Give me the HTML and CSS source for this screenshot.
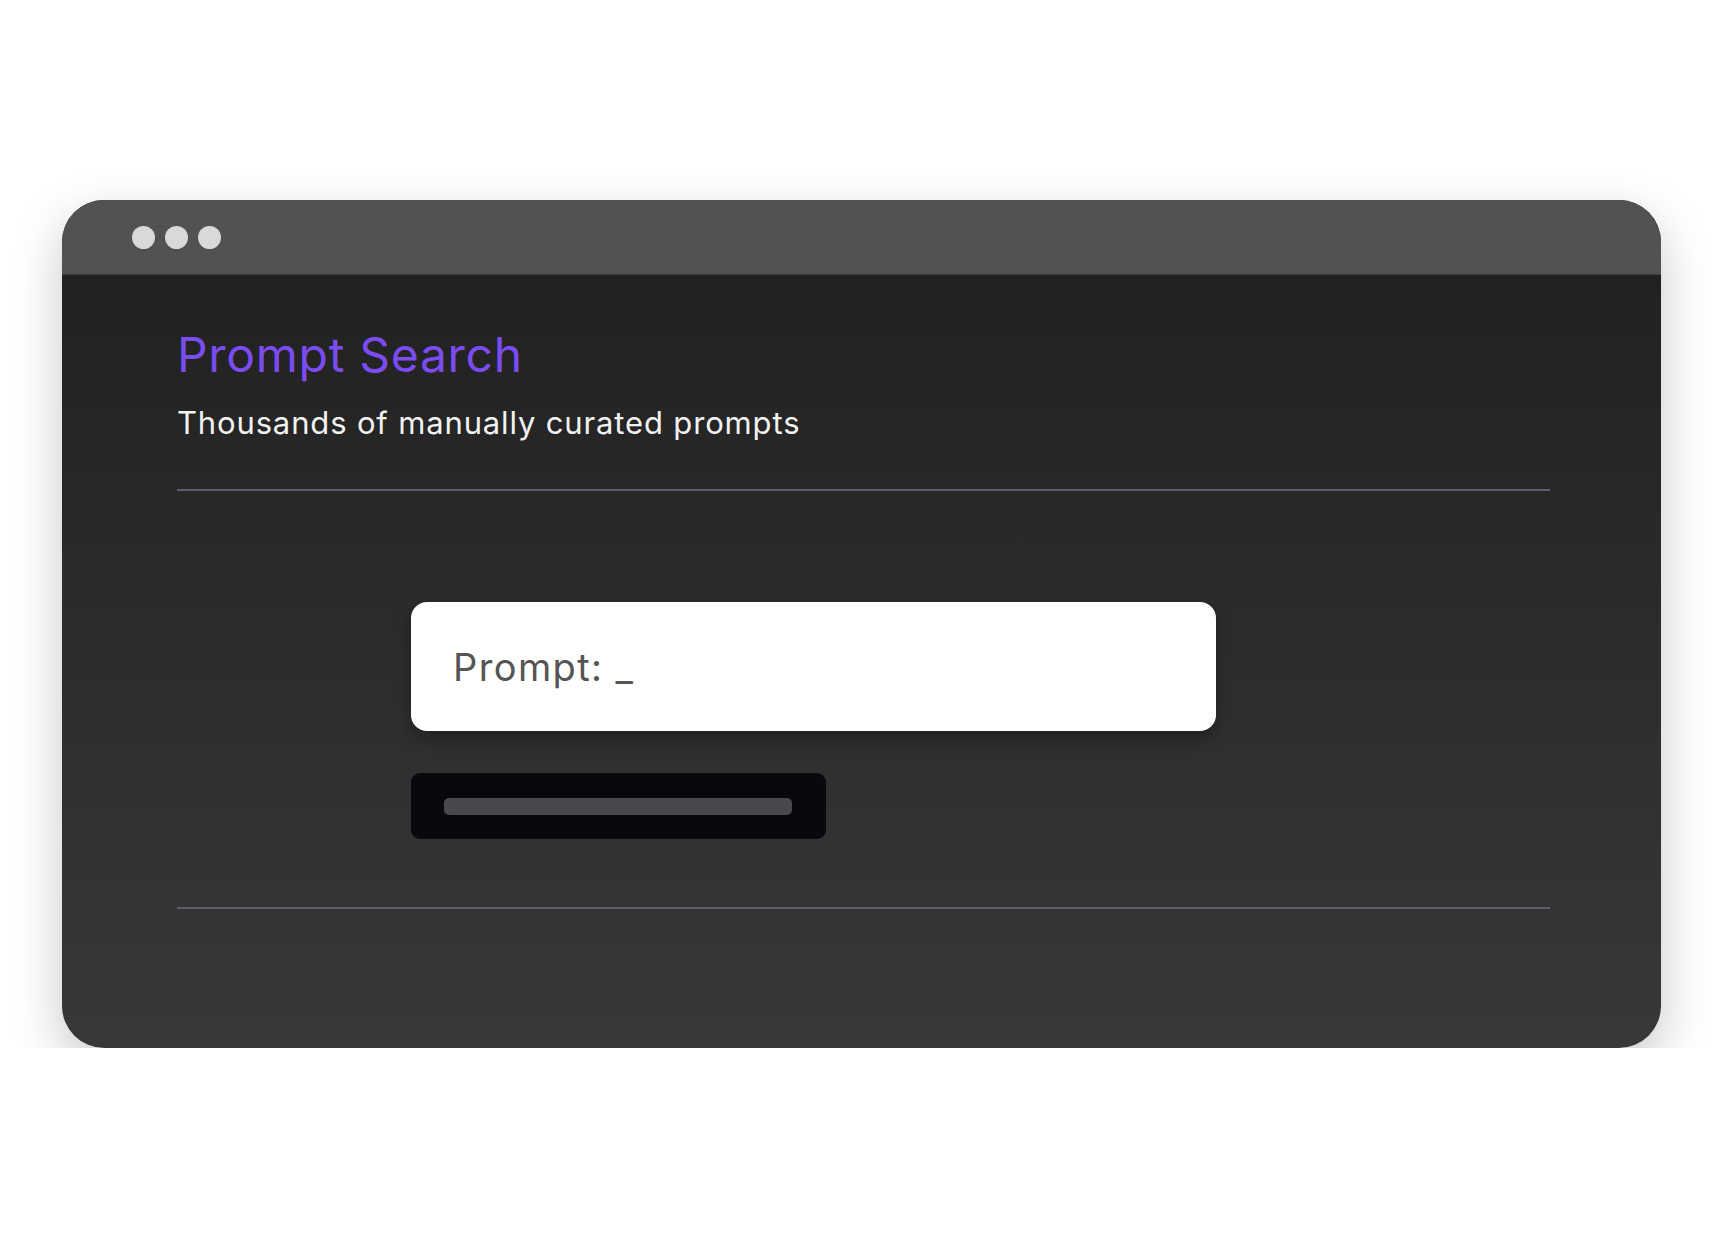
FILE: index.html
```html
<!DOCTYPE html>
<html lang="en">
  <head>
    <meta charset="UTF-8" />
    <title>Prompt Search</title>
    <link rel="stylesheet" href="styles.css">
  </head>
  <body>
    <div class="window">
      <div class="titlebar">
        <span class="dot"></span>
        <span class="dot"></span>
        <span class="dot"></span>
      </div>
      <div class="content">
        <h1 class="title">Prompt Search</h1>
        <p class="subtitle">Thousands of manually curated prompts</p>
        <hr class="line">
        <div class="search">
          <div class="input">Prompt: _</div>
          <div class="button"><span class="button-bar"></span></div>
        </div>
        <hr class="line">
      </div>
    </div>
  </body>
</html>
```

FILE: styles.css
```css
*{
    margin: 0;
    padding: 0;
    box-sizing: border-box;
}
body{
    background: #ffffff;
    font-family: Inter, "Liberation Sans", sans-serif;
}
.window{
    width: 1599px;
    height: 848px;
    margin-top: 200px;
    margin-left: 62px;
    border-radius: 42px;
    overflow: hidden;
    background: linear-gradient(180deg, #1f1f1f 0%, #383838 100%);
    box-shadow: 0 18px 50px rgba(0, 0, 0, 0.22);
}
.titlebar{
    height: 75px;
    background: #525252;
    border-bottom: 1px solid #3c3c3c;
    display: flex;
    align-items: center;
    gap: 10px;
    padding-left: 70px;
}
.dot{
    width: 23px;
    height: 23px;
    border-radius: 50%;
    background: #d9d9d9;
}
.content{
    padding: 51px 111px 0 115px;
}
.title{
    font-size: 48px;
    line-height: 58px;
    font-weight: 400;
    letter-spacing: 0.7px;
    color: #7b4cf2;
}
.subtitle{
    margin-top: 20px;
    font-size: 31px;
    line-height: 37px;
    letter-spacing: 0.85px;
    color: #f2f2f2;
}
.line{
    border: none;
    height: 2px;
    background: #5e5a70;
    margin-top: 48px;
}
.search{
    padding: 111px 0 68px 234px;
}
.input{
    width: 805px;
    height: 129px;
    background: #ffffff;
    border-radius: 16px;
    display: flex;
    align-items: center;
    padding-left: 42px;
    font-size: 38px;
    letter-spacing: 1.4px;
    color: #555555;
    box-shadow: 0 8px 16px rgba(0, 0, 0, 0.3);
}
.button{
    margin-top: 42px;
    width: 415px;
    height: 66px;
    background: #0a080d;
    border-radius: 9px;
    display: flex;
    align-items: center;
    padding-left: 33px;
}
.button-bar{
    width: 348px;
    height: 17px;
    border-radius: 5px;
    background: #4a474d;
}
.search + .line{
    margin-top: 0;
}
```
